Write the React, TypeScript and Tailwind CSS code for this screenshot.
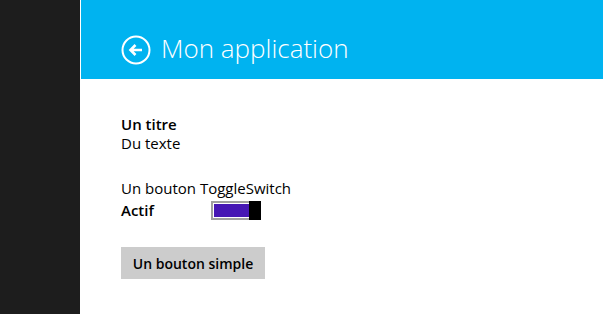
import React, { useState } from 'react'

const font = { fontFamily: '"Open Sans", "Noto Sans", sans-serif' }

const BackIcon = () => (
  <svg width="30" height="30" viewBox="0 0 30 30" fill="none" stroke="white">
    <circle cx="15" cy="15" r="13.5" strokeWidth="2" />
    <path d="M21 15H9.5M14.5 10L9.5 15L14.5 20" strokeWidth="2.6" />
  </svg>
)

export default function App() {
  const [on, setOn] = useState(true)

  return (
    <div className="flex h-[314px] w-[603px] overflow-hidden bg-white" style={font}>
      <div className="w-[80px] shrink-0 bg-[#1d1d1d]" />
      <div className="w-px shrink-0 bg-white" />
      <div className="flex flex-1 flex-col">
        {/* Header */}
        <div className="flex h-[79px] items-end bg-[#00b3f0] pb-[14px] pl-[40px]">
          <BackIcon />
          <span className="ml-[10px] text-[26px] font-light leading-[34px] text-white">Mon application</span>
        </div>

        {/* Content */}
        <div className="flex flex-col pl-[40px] pt-[36px] text-[15px] leading-[19px] text-black">
          <span className="font-semibold">Un titre</span>
          <span>Du texte</span>

          <span className="mt-[26px]">Un bouton ToggleSwitch</span>
          <div className="mt-[3px] flex items-center">
            <span className="w-[90px] font-semibold">Actif</span>
            <button
              onClick={() => setOn(!on)}
              className="flex h-[19px] w-[50px] border-2 border-[#a0a0a0] bg-white p-px pr-0"
            >
              <span className={`flex-1 ${on ? 'bg-[#4617b4]' : 'bg-white'}`} />
              <span className="-my-[3px] -mr-[2px] w-[12px] bg-black" />
            </button>
          </div>

          <button className="mt-[27px] h-[32px] w-[144px] bg-[#cccccc] text-[14px] font-semibold text-black">
            Un bouton simple
          </button>
        </div>
      </div>
    </div>
  )
}
